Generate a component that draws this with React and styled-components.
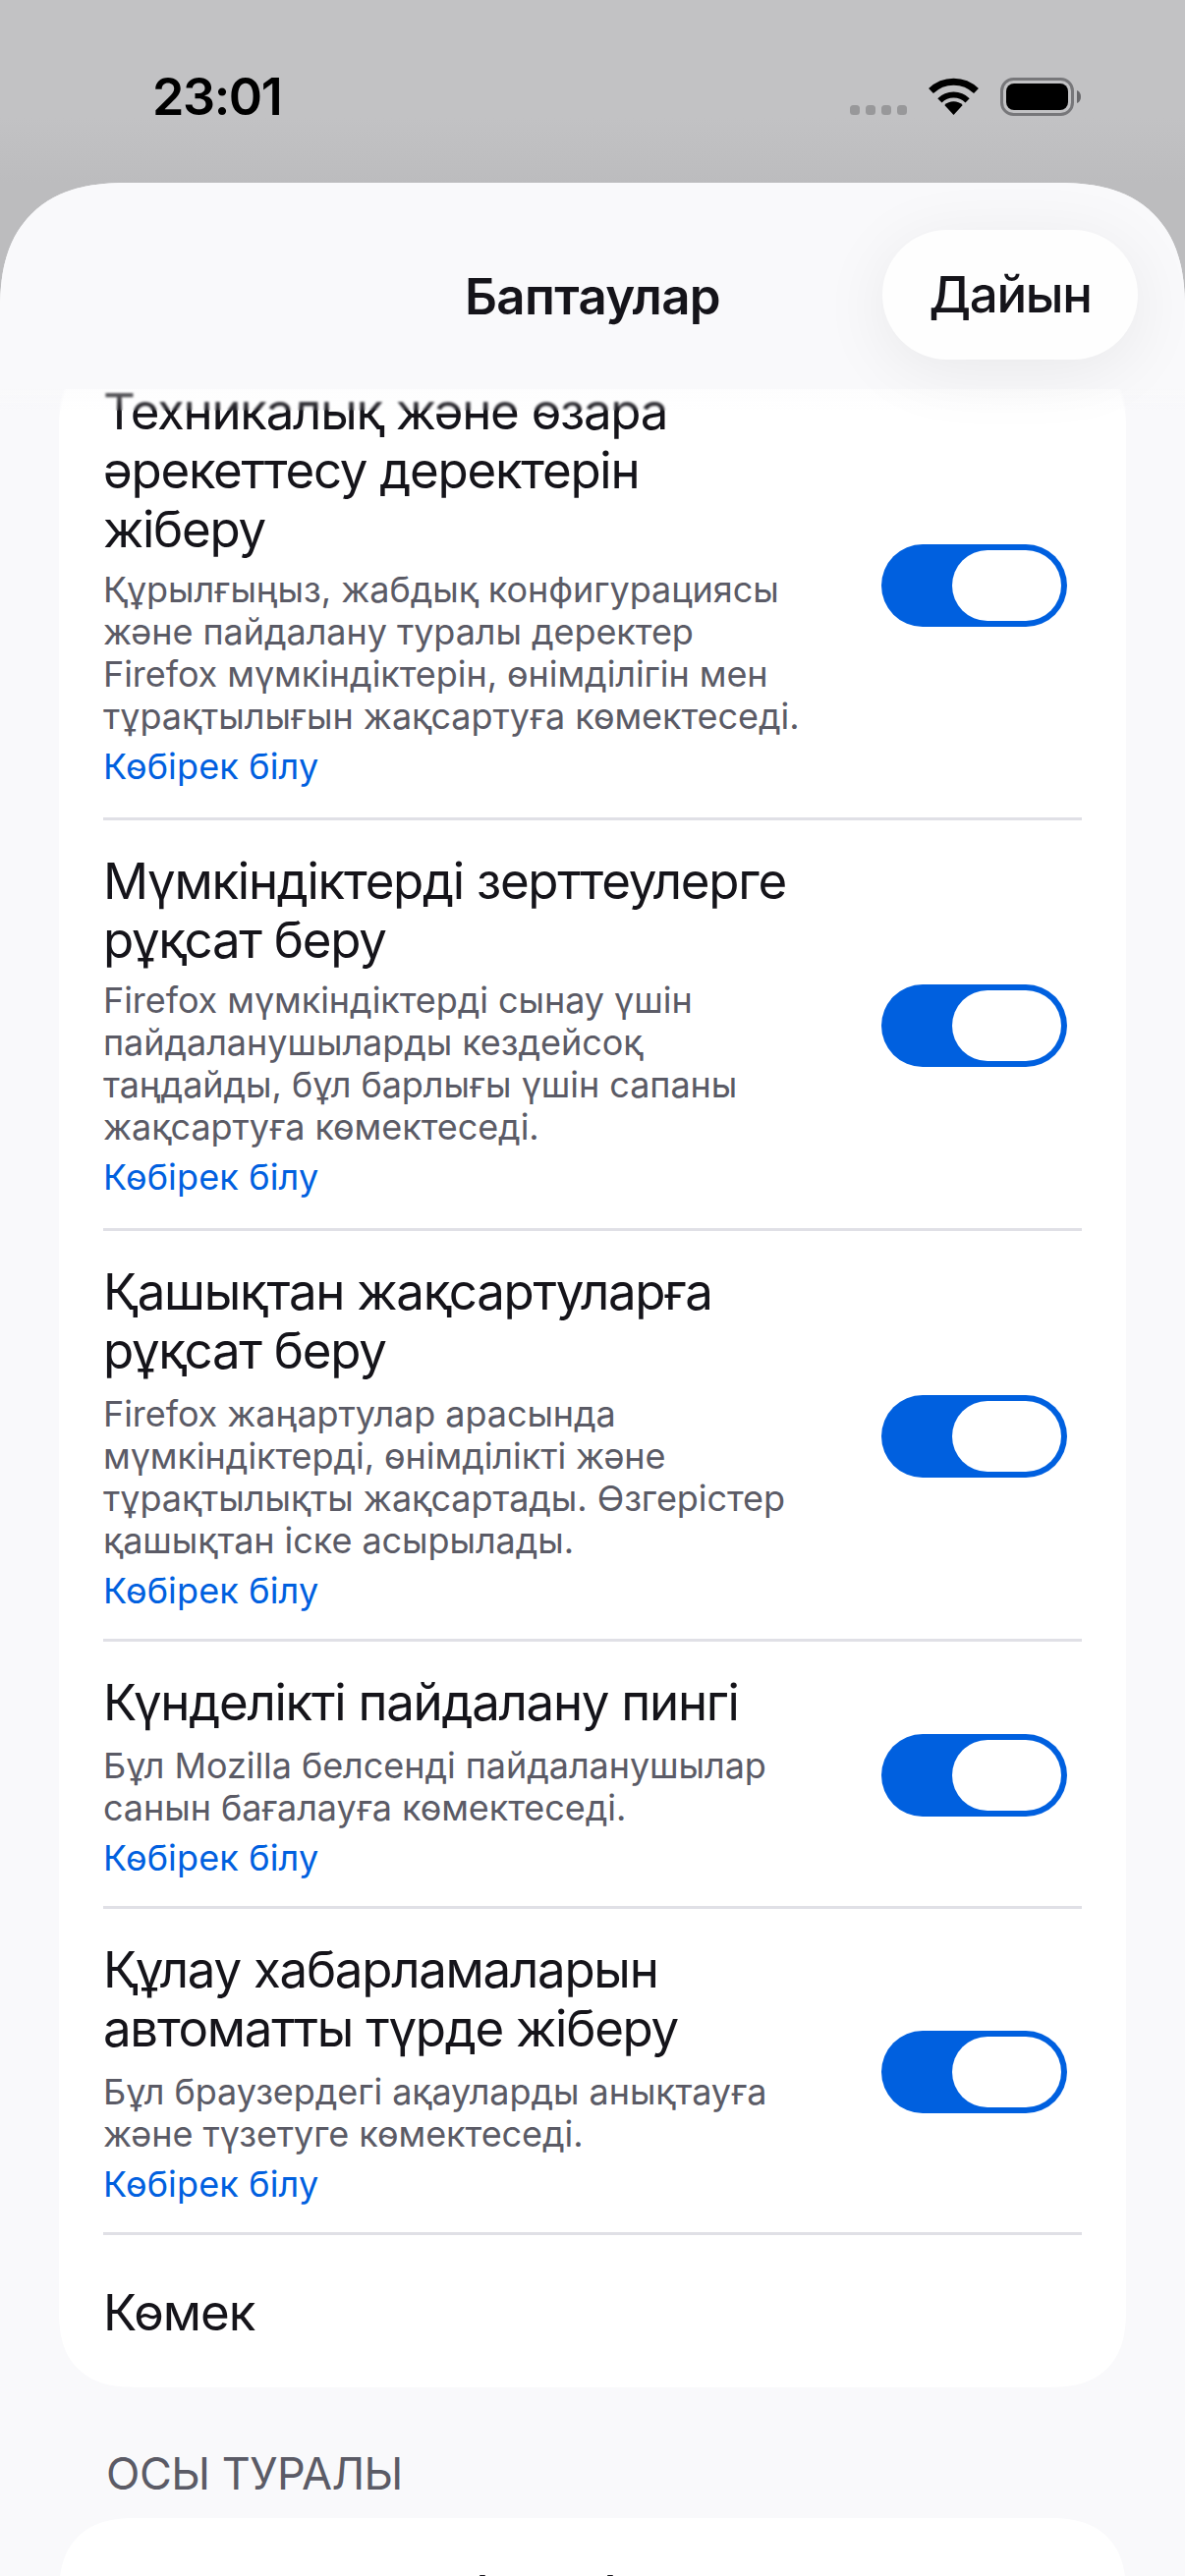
import React from "react";
import styled, { createGlobalStyle } from "styled-components";

const Global = createGlobalStyle`
  html, body { margin: 0; padding: 0; height: 2622px; overflow: hidden; background: #c1c1c3; }
  #root { height: 2622px; }
  * { box-sizing: border-box; }
`;

const Screen = styled.div`
  width: 1206px;
  height: 2622px;
  display: flex;
  flex-direction: column;
  overflow: hidden;
  font-family: Inter, "Noto Sans", sans-serif;
  color: #15141a;
  background: linear-gradient(180deg, #c2c2c4 0, #c2c2c4 120px, #bcbcbe 186px);
`;

const StatusBar = styled.div`
  height: 186px;
  flex: none;
  display: flex;
  align-items: center;
  justify-content: space-between;
  padding: 0 106px 0 155px;
`;

const Clock = styled.div`
  font-size: 52px;
  font-weight: 600;
  line-height: 60px;
  letter-spacing: -1.4px;
  color: #000;
  margin-top: 11px;
`;

const StatusIcons = styled.div`
  display: flex;
  align-items: flex-end;
  height: 39px;
  margin-top: 11px;
`;

const SignalDots = styled.div`
  display: flex;
  gap: 6px;
  margin-right: 22px;
  margin-bottom: 1px;
`;

const SignalDot = styled.span`
  width: 10px;
  height: 10px;
  border-radius: 3.5px;
  background: #98989a;
`;

const WifiIcon = styled.svg`
  width: 51px;
  height: 38px;
  margin-right: 22px;
  margin-bottom: 1px;
`;

const BatteryIcon = styled.svg`
  width: 82px;
  height: 39px;
`;

const Sheet = styled.div`
  position: relative;
  flex: 1;
  min-height: 0;
  display: flex;
  flex-direction: column;
  overflow: hidden;
  background: #f9f9fb;
  border-radius: 110px 110px 0 0;
  @supports (corner-shape: squircle) {
    border-radius: 130px 130px 0 0;
    corner-shape: superellipse(1.3);
  }
`;

const Header = styled.header`
  position: relative;
  z-index: 2;
  flex: none;
  height: 210px;
  display: grid;
  grid-template-columns: 1fr auto 1fr;
  align-items: center;
  padding: 48px 48px 30px;
  background: #f9f9fb;
`;

const HeaderTitle = styled.h1`
  grid-column: 2;
  margin: 0 0 -4px;
  font-size: 51px;
  line-height: 60px;
  font-weight: 600;
  letter-spacing: -0.6px;
  color: #15141a;
`;

const DoneButton = styled.button`
  grid-column: 3;
  justify-self: end;
  width: 260px;
  height: 132px;
  border: 0;
  border-radius: 66px;
  background: #fefefe;
  font: 500 51px/60px Inter, "Noto Sans", sans-serif;
  letter-spacing: -1.3px;
  color: #15141a;
  box-shadow: 0 12px 70px rgba(0, 0, 0, 0.07);
`;

const Body = styled.main`
  position: relative;
  flex: 1;
  min-height: 0;
  overflow: hidden;
  padding: 0 60px;
  &::before {
    content: "";
    position: absolute;
    z-index: 1;
    left: 0;
    right: 0;
    top: 0;
    height: 22px;
    backdrop-filter: blur(1.2px);
    background: linear-gradient(180deg, rgba(249, 249, 251, 0.4), rgba(249, 249, 251, 0));
  }
`;

const Card = styled.section`
  background: #fff;
  border-radius: 66px;
  padding: 0 45px;
  @supports (corner-shape: squircle) {
    border-radius: 78px;
    corner-shape: superellipse(1.3);
  }
  &:first-child {
    margin-top: -39px;
  }
`;

const Row = styled.div`
  display: flex;
  align-items: center;
  justify-content: space-between;
  padding: 32px 0 ${(p) => (p.$tall ? 27 : 30)}px;
  border-bottom: 3px solid #e0e0e6;
`;

const RowText = styled.div`
  display: flex;
  flex-direction: column;
`;

const Title = styled.div`
  font-size: 51px;
  line-height: 60px;
  font-weight: 400;
  letter-spacing: -1.27px;
  white-space: nowrap;
`;

const Desc = styled.div`
  margin-top: ${(p) => (p.$tall ? 13 : 10)}px;
  font-size: 36px;
  line-height: 43px;
  color: #5b5b66;
  letter-spacing: -0.06px;
  white-space: nowrap;
`;

const Line = styled.span`
  display: block;
`;

const LearnMore = styled.a`
  margin-top: 8px;
  font-size: 36px;
  line-height: 43px;
  color: #0060df;
  letter-spacing: 0.15px;
`;

const Toggle = styled.span`
  flex: none;
  width: 189px;
  height: 84px;
  margin: 0 15px ${(p) => (p.$tall ? 3 : 0)}px 0;
  padding: 6px;
  border-radius: 42px;
  background: #0060df;
  display: flex;
  justify-content: flex-end;
`;

const Knob = styled.span`
  width: 111px;
  height: 72px;
  border-radius: 36px;
  background: #fff;
`;

const HelpRow = styled.div`
  padding: 49px 0 46px;
  font-size: 51px;
  line-height: 60px;
  letter-spacing: -1px;
`;

const SectionLabel = styled.h2`
  margin: 66px 0 24px 48px;
  font-size: 45px;
  line-height: 43px;
  font-weight: 400;
  color: #5b5b66;
  text-transform: uppercase;
  letter-spacing: -0.5px;
`;

const AboutCard = styled(Card)`
  height: 200px;
  padding-top: 58px;
  padding-left: 428px;
  display: flex;
  justify-content: flex-start;
  gap: 124px;
`;

const AboutPeek = styled.span`
  width: 6px;
  height: 6px;
  border-radius: 1px;
  background: #15141a;
`;

const items = [
  {
    title: ["Техникалық және өзара", "әрекеттесу деректерін", "жіберу"],
    desc: ["Құрылғыңыз, жабдық конфигурациясы", "және пайдалану туралы деректер", "Firefox мүмкіндіктерін, өнімділігін мен", "тұрақтылығын жақсартуға көмектеседі."],
  },
  {
    title: ["Мүмкіндіктерді зерттеулерге", "рұқсат беру"],
    desc: ["Firefox мүмкіндіктерді сынау үшін", "пайдаланушыларды кездейсоқ", "таңдайды, бұл барлығы үшін сапаны", "жақсартуға көмектеседі."],
  },
  {
    title: ["Қашықтан жақсартуларға", "рұқсат беру"],
    desc: ["Firefox жаңартулар арасында", "мүмкіндіктерді, өнімділікті және", "тұрақтылықты жақсартады. Өзгерістер", "қашықтан іске асырылады."],
    tall: true,
  },
  {
    title: ["Күнделікті пайдалану пингі"],
    desc: ["Бұл Mozilla белсенді пайдаланушылар", "санын бағалауға көмектеседі."],
    tall: true,
  },
  {
    title: ["Құлау хабарламаларын", "автоматты түрде жіберу"],
    desc: ["Бұл браузердегі ақауларды анықтауға", "және түзетуге көмектеседі."],
    tall: true,
  },
];

export default function App() {
  return (
    <Screen>
      <Global />
      <StatusBar>
        <Clock>23:01</Clock>
        <StatusIcons>
          <SignalDots>
            <SignalDot />
            <SignalDot />
            <SignalDot />
            <SignalDot />
          </SignalDots>
          <WifiIcon viewBox="0 0 51 38" fill="none">
            <path d="M25.5 38 L16.3 28 A13.2 13.2 0 0 1 34.7 28 Z" fill="#000" />
            <path d="M11.4 23.4 A20 20 0 0 1 39.6 23.4" stroke="#000" strokeWidth="6" />
            <path d="M2.5 13.5 A33 33 0 0 1 48.5 13.5" stroke="#000" strokeWidth="7" />
          </WifiIcon>
          <BatteryIcon viewBox="0 0 82 39" fill="none">
            <rect x="1.5" y="1.5" width="72" height="36" rx="12" stroke="#77777a" strokeWidth="3" />
            <rect x="6" y="6" width="63" height="27" rx="8" fill="#000" />
            <path d="M78 13 C81 14 82 17 82 19.5 C82 22 81 25 78 26 Z" fill="#68686b" />
          </BatteryIcon>
        </StatusIcons>
      </StatusBar>
      <Sheet>
        <Header>
          <HeaderTitle>Баптаулар</HeaderTitle>
          <DoneButton>Дайын</DoneButton>
        </Header>
        <Body>
          <Card>
            {items.map((item) => (
              <Row key={item.title[0]} $tall={item.tall}>
                <RowText>
                  <Title>
                    {item.title.map((t) => (
                      <Line key={t}>{t}</Line>
                    ))}
                  </Title>
                  <Desc $tall={item.tall}>
                    {item.desc.map((t) => (
                      <Line key={t}>{t}</Line>
                    ))}
                  </Desc>
                  <LearnMore>Көбірек білу</LearnMore>
                </RowText>
                <Toggle $tall={item.tall}>
                  <Knob />
                </Toggle>
              </Row>
            ))}
            <HelpRow>Көмек</HelpRow>
          </Card>
          <SectionLabel>Осы туралы</SectionLabel>
          <AboutCard>
            <AboutPeek />
            <AboutPeek />
          </AboutCard>
        </Body>
      </Sheet>
    </Screen>
  );
}
